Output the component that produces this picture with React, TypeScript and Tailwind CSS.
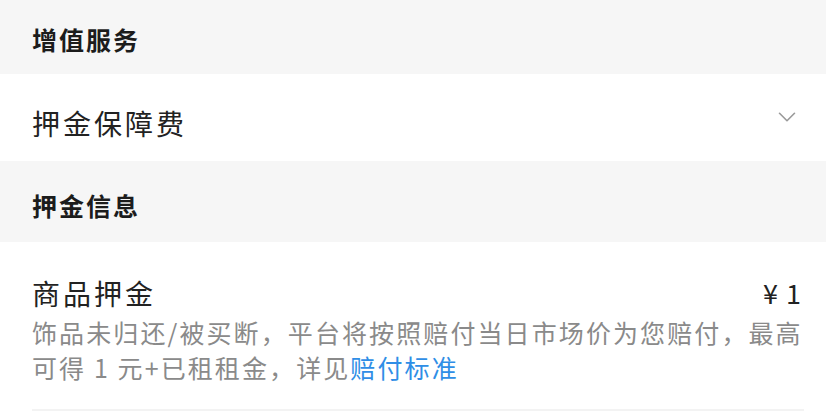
import { ChevronDown } from "lucide-react";

const font = { fontFamily: '"Noto Sans CJK SC", "Noto Sans", sans-serif' };

const SectionHeader = ({ title, h }: { title: string; h: string }) => {
  return (
    <div className={`${h} bg-[#f6f6f6] px-[32px] flex items-center pt-[8px]`}>
      <p className="text-[25px] font-bold tracking-[2px] text-[#1c1c1c] leading-none">{title}</p>
    </div>
  );
};

const App = () => {
  return (
    <div className="w-[826px] h-[420px] bg-white overflow-hidden" style={font}>
      {/* value-added services */}
      <div className="h-[74px] bg-[#f6f6f6] px-[32px] flex items-center pt-[4px]">
        <p className="text-[25px] font-bold tracking-[2px] text-[#1c1c1c] leading-none">增值服务</p>
      </div>

      {/* deposit protection fee row */}
      <div className="h-[87px] bg-white pl-[32px] pr-[24px] flex items-center justify-between pt-[10px]">
        <p className="text-[28px] tracking-[3px] text-[#222] leading-none">押金保障费</p>
        <ChevronDown className="w-[30px] h-[30px] text-[#9a9a9a] -mt-[12px]" strokeWidth={1.3} />
      </div>

      <SectionHeader title="押金信息" h="h-[81px]" />

      {/* deposit item */}
      <div className="pl-[32px] pr-[24px] pt-[34px]">
        <div className="flex justify-between items-center">
          <p className="text-[28px] tracking-[3px] text-[#222] leading-[34px]">商品押金</p>
          <p className="text-[27px] text-[#222] leading-[34px] tracking-[1px]">¥ 1</p>
        </div>
        <p className="text-[25px] tracking-[2.1px] text-[#8a8a8a] leading-[35px] mt-[5px] whitespace-nowrap">
          饰品未归还/被买断，平台将按照赔付当日市场价为您赔付，最高
          <br />
          可得 1 元+已租租金，详见
          <span className="text-[#2f8ee6]">赔付标准</span>
        </p>
        <div className="mt-[24px] h-[2px] bg-[#f3f3f3] mr-[-2px]" />
      </div>
    </div>
  );
};

export default App;
